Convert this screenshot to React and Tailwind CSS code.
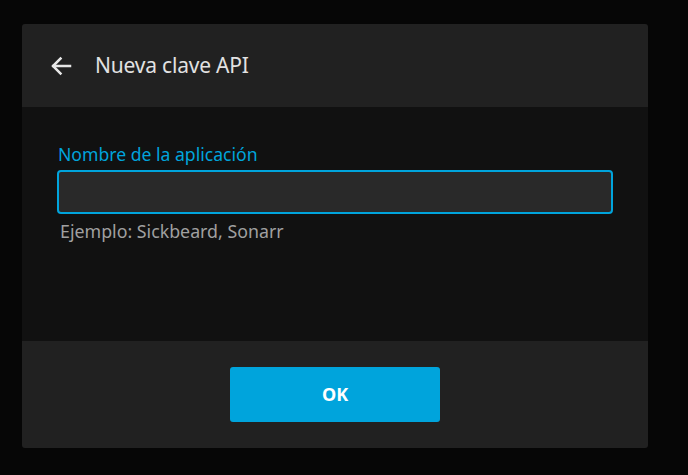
import { useState } from "react";

const ArrowLeft = () => (
  <svg width="24" height="24" viewBox="0 0 24 24" fill="none" stroke="#e6e6e6" strokeWidth="2.5" strokeLinecap="square">
    <path d="M21 12H4.5" />
    <path d="M11.5 4.5L4 12l7.5 7.5" />
  </svg>
);

export default function App() {
  const [name, setName] = useState("");

  return (
    <div className="w-[688px] h-[475px] bg-[#060606] pt-6 pl-[22px]" style={{ fontFamily: "'Noto Sans', sans-serif" }}>
      <div className="w-[626px] h-[424px] rounded-[3px] overflow-hidden flex flex-col">
        <div className="h-[83px] bg-[#212121] flex items-center pl-[27px] shrink-0">
          <button className="w-[24px] h-[24px] flex items-center justify-center">
            <ArrowLeft />
          </button>
          <h2 className="ml-[22px] text-[21px] text-[#e2e2e2] tracking-[-0.2px]">Nueva clave API</h2>
        </div>

        <div className="flex-1 bg-[#111111] px-[35px] pt-[34px]">
          <label className="block text-[17.6px] leading-[26px] text-[#00a4dc] ml-[1px]">Nombre de la aplicación</label>
          <input
            value={name}
            onChange={(e) => setName(e.target.value)}
            className="mt-[3px] block w-[556px] h-[44px] bg-[#292929] border-2 border-[#00a4dc] rounded-[4px] outline-none text-white px-2"
          />
          <p className="mt-[5px] ml-[3px] text-[17.8px] leading-[24px] text-[#a0a0a0]">Ejemplo: Sickbeard, Sonarr</p>
        </div>

        <div className="h-[107px] bg-[#212121] flex items-center justify-center shrink-0">
          <button className="w-[210px] h-[55px] bg-[#00a4dc] rounded-[3px] text-white font-bold text-[18px]">OK</button>
        </div>
      </div>
    </div>
  );
}
